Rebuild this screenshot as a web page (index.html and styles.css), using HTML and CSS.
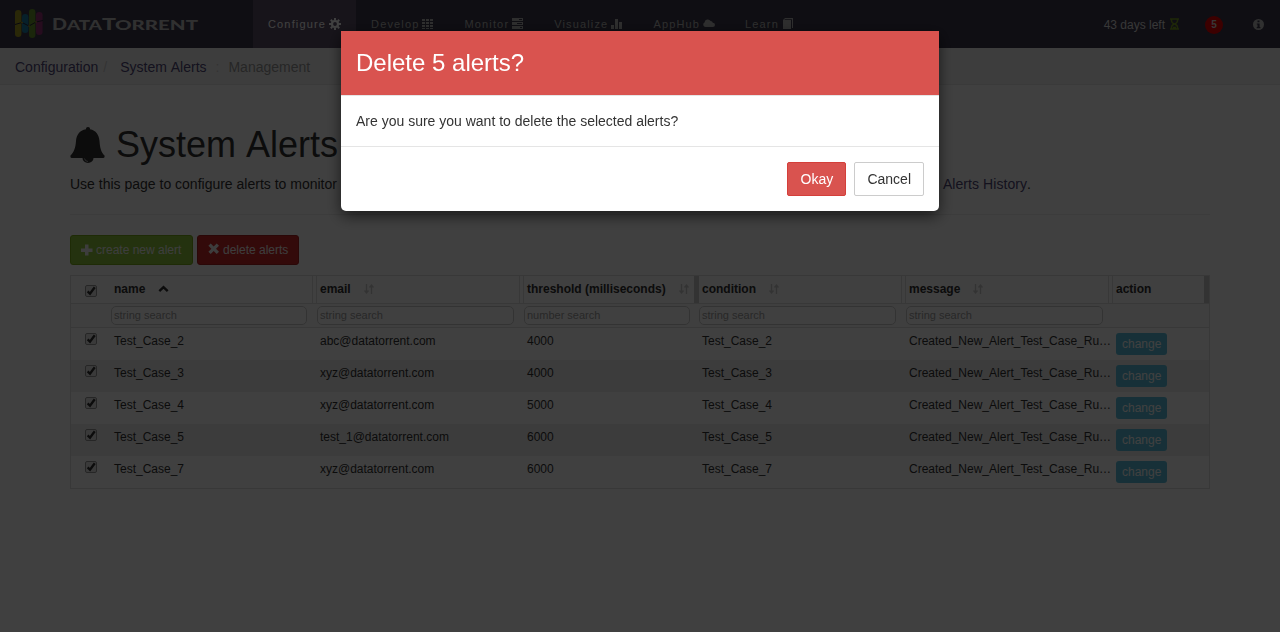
FILE: index.html
```
<!DOCTYPE html>
<html lang="en">
<head>
<meta charset="utf-8">
<title>System Alerts</title>
<link rel="stylesheet" href="styles.css">
</head>
<body>
<nav class="navbar">
  <svg class="logo" width="190" height="32" viewBox="0 0 190 32">
    <rect x="0" y="2" width="6.4" height="27" rx="3.2" fill="#a8a020"/>
    <rect x="7" y="6" width="6.4" height="19" rx="3.2" fill="#1d80a8"/>
    <rect x="14" y="1" width="6.4" height="29" rx="3.2" fill="#68982c"/>
    <rect x="21" y="4" width="6.6" height="23" rx="3.3" fill="#983078"/>
    <path d="M0 16.500L7 14.500L14 18L21 14L28 12.500" fill="none" stroke="#28243a" stroke-width="1"/>
    <g fill="#d0b020"><circle cx="7" cy="14.500" r=".8"/><circle cx="14" cy="18" r=".8"/><circle cx="21" cy="14" r=".8"/></g>
    <g class="logo-text">
      <text x="37" y="22" font-size="17" textLength="15" lengthAdjust="spacingAndGlyphs">D</text>
      <text x="52" y="22" font-size="14" textLength="35" lengthAdjust="spacingAndGlyphs">ATA</text>
      <text x="87" y="22" font-size="17" textLength="14" lengthAdjust="spacingAndGlyphs">T</text>
      <text x="100" y="22" font-size="14" textLength="83" lengthAdjust="spacingAndGlyphs">ORRENT</text>
    </g>
  </svg>
  <ul class="menu">
    <li class="item active"><span>Configure</span><svg class="ic" viewBox="0 0 12 12"><g fill="none" stroke="currentColor"><circle cx="6" cy="6" r="3" stroke-width="2.200"/><path d="M6 0V2M6 10V12M0 6H2M10 6H12M1.800 1.800L3.200 3.200M8.800 8.800L10.200 10.200M1.800 10.200L3.200 8.800M8.800 3.200L10.200 1.800" stroke-width="2"/></g></svg></li>
    <li class="item"><span>Develop</span><svg class="ic" viewBox="0 0 12 12"><path d="M0 1h3v2H0zM4 1h3v2H4zM8 1h3v2H8zM0 4h3v2H0zM4 4h3v2H4zM8 4h3v2H8zM0 7h3v2H0zM4 7h3v2H4zM8 7h3v2H8zM0 10h3v1H0zM4 10h3v1H4zM8 10h3v1H8z"/></svg></li>
    <li class="item"><span>Monitor</span><svg class="ic" viewBox="0 0 12 12"><path fill-rule="evenodd" d="M0 0h11v3H0zM0 4h11v3H0zM0 8h11v3H0zM7 1v1h3V1zM5 5v1h5V5zM8 9v1h2V9z"/></svg></li>
    <li class="item"><span>Visualize</span><svg class="ic" viewBox="0 0 12 12"><path d="M0 7h3v4H0zM4 1h3v10H4zM8 4h3v7H8z"/></svg></li>
    <li class="item"><span>AppHub</span><svg class="ic" viewBox="0 0 12 12"><path d="M2.500 9A2.400 2.400 0 0 1 1.500 4.500A3.300 3.300 0 0 1 7.600 3A2.300 2.300 0 0 1 9.800 4.800A2.100 2.100 0 0 1 9.900 9z"/></svg></li>
    <li class="item"><span>Learn</span><svg class="ic" viewBox="0 0 12 12"><path d="M1 2L3 0H11V10H10V1.200H3L2.300 2H9V11H1z"/></svg></li>
  </ul>
  <div class="status">
    <span class="days">43 days left</span>
    <svg class="glass" width="9" height="12" viewBox="0 0 9 12"><path d="M0 .9H9M0 11.100H9M1.500 1V3Q1.500 4.500 4 6Q1.500 7.500 1.500 9V11M7.500 1V3Q7.500 4.500 5 6Q7.500 7.500 7.500 9V11M3 9.600H6" fill="none" stroke="#7a9e20" stroke-width="1.500"/></svg>
    <span class="count">5</span>
    <svg class="info" width="11" height="11" viewBox="0 0 11 11"><circle cx="5.500" cy="5.500" r="5.500" fill="#c0c0c0"/><path d="M4.500 1.600h2v1.700h-2zM3.800 4.400h2.800V8h.8v1.200H3.700V8h.8V5.400h-.7z" fill="#3c384c"/></svg>
  </div>
</nav>
<div class="crumbs"><a>Configuration</a><i class="slash">/</i><a>System Alerts</a><i class="colon">:</i><span>Management</span></div>
<main class="container">
  <h1 class="title"><svg width="36" height="36" viewBox="0 0 36 36"><path d="M18 0a2 2 0 0 1 2 2.300C26 3.300 29 8 29.500 14C30 21 31 25 34.500 28.500Q35 31 33 31H23.500A5.500 5 0 0 1 12.500 31H2Q0 31 .5 28.500C4 25 5.500 21 6 14C6.500 8 9.500 3.300 16 2.300A2 2 0 0 1 18 0z" fill="#303030"/><path d="M14.500 31.500Q15 34.300 18 34.500" fill="none" stroke="#ccc" stroke-width=".8"/></svg><span>System Alerts</span></h1>
  <div class="lead"><span>Use this page to configure alerts to monitor</span><span><a>Alerts History</a>.</span></div>
  <hr class="rule">
  <div class="actions">
    <button class="btn green"><svg class="ic" viewBox="0 0 12 12"><path d="M4 .5h3.500V4.500H11.500V8H7.500V11.500H4V8H0V4.500H4z"/></svg>create new alert</button>
    <button class="btn red"><svg class="ic up1" viewBox="0 0 12 12"><path d="M2.700 .5L5.700 3.500L8.700 .5L11 2.800L8 5.800L11 8.800L8.700 11.100L5.700 8.100L2.700 11.100L.4 8.800L3.400 5.800L.4 2.800z"/></svg>delete alerts</button>
  </div>
  <div class="table">
    <div class="row head">
      <div class="chk"><b class="box"><svg viewBox="0 0 12 12"><path d="M2 6.500L4.800 9.300L10.500 1.500"/></svg></b></div>
      <div class="th">name<svg class="up" width="11" height="8" viewBox="0 0 11 8"><path d="M1.300 6.200L5.500 2.200L9.700 6.200" fill="none" stroke="#303030" stroke-width="2.400"/></svg></div>
      <div class="th">email<svg class="sort" viewBox="0 0 10 12"><path d="M2.500 1V10M.5 7.500L2.500 10L4.500 7.500M7.500 11V2M5.500 4.500L7.500 2L9.500 4.500"/></svg></div>
      <div class="th solid">threshold (milliseconds)<svg class="sort" viewBox="0 0 10 12"><path d="M2.500 1V10M.5 7.500L2.500 10L4.500 7.500M7.500 11V2M5.500 4.500L7.500 2L9.500 4.500"/></svg></div>
      <div class="th">condition<svg class="sort" viewBox="0 0 10 12"><path d="M2.500 1V10M.5 7.500L2.500 10L4.500 7.500M7.500 11V2M5.500 4.500L7.500 2L9.500 4.500"/></svg></div>
      <div class="th">message<svg class="sort" viewBox="0 0 10 12"><path d="M2.500 1V10M.5 7.500L2.500 10L4.500 7.500M7.500 11V2M5.500 4.500L7.500 2L9.500 4.500"/></svg></div>
      <div class="th solid">action</div>
    </div>
    <div class="row filter">
      <div></div>
      <div><div class="search">string search</div></div>
      <div><div class="search">string search</div></div>
      <div><div class="search number">number search</div></div>
      <div><div class="search">string search</div></div>
      <div><div class="search">string search</div></div>
      <div></div>
    </div>
    <div class="row data"><div class="chk"><b class="box"><svg viewBox="0 0 12 12"><path d="M2 6.500L4.800 9.300L10.500 1.500"/></svg></b></div><div class="td">Test_Case_2</div><div class="td">abc@datatorrent.com</div><div class="td">4000</div><div class="td">Test_Case_2</div><div class="td">Created_New_Alert_Test_Case_Ru…</div><div class="td"><span class="change">change</span></div></div>
    <div class="row data alt"><div class="chk"><b class="box"><svg viewBox="0 0 12 12"><path d="M2 6.500L4.800 9.300L10.500 1.500"/></svg></b></div><div class="td">Test_Case_3</div><div class="td">xyz@datatorrent.com</div><div class="td">4000</div><div class="td">Test_Case_3</div><div class="td">Created_New_Alert_Test_Case_Ru…</div><div class="td"><span class="change">change</span></div></div>
    <div class="row data"><div class="chk"><b class="box"><svg viewBox="0 0 12 12"><path d="M2 6.500L4.800 9.300L10.500 1.500"/></svg></b></div><div class="td">Test_Case_4</div><div class="td">xyz@datatorrent.com</div><div class="td">5000</div><div class="td">Test_Case_4</div><div class="td">Created_New_Alert_Test_Case_Ru…</div><div class="td"><span class="change">change</span></div></div>
    <div class="row data alt"><div class="chk"><b class="box"><svg viewBox="0 0 12 12"><path d="M2 6.500L4.800 9.300L10.500 1.500"/></svg></b></div><div class="td">Test_Case_5</div><div class="td">test_1@datatorrent.com</div><div class="td">6000</div><div class="td">Test_Case_5</div><div class="td">Created_New_Alert_Test_Case_Ru…</div><div class="td"><span class="change">change</span></div></div>
    <div class="row data"><div class="chk"><b class="box"><svg viewBox="0 0 12 12"><path d="M2 6.500L4.800 9.300L10.500 1.500"/></svg></b></div><div class="td">Test_Case_7</div><div class="td">xyz@datatorrent.com</div><div class="td">6000</div><div class="td">Test_Case_7</div><div class="td">Created_New_Alert_Test_Case_Ru…</div><div class="td"><span class="change">change</span></div></div>
  </div>
</main>
<div class="backdrop">
  <div class="modal">
    <div class="modal-head">Delete 5 alerts?</div>
    <div class="modal-body">Are you sure you want to delete the selected alerts?</div>
    <div class="modal-foot"><button class="mbtn okay">Okay</button><button class="mbtn">Cancel</button></div>
  </div>
</div>
</body>
</html>
```
FILE: styles.css
```
* { box-sizing: border-box; }
body { margin: 0; height: 632px; overflow: hidden; background: #fff; color: #333; font: 14px/20px "Liberation Sans", Arial, sans-serif; }
.navbar { display: flex; height: 48px; padding-left: 15px; background: #3c384c; }
.logo { margin-top: 8px; flex: none; }
.logo-text { font-family: Lato, sans-serif; font-weight: 900; fill: #c0c0c0; }
.menu { display: flex; margin: 0 0 0 48px; padding: 0; list-style: none; }
.item { display: flex; align-items: center; padding: 0 15px; color: #b8b8b8; font-size: 11px; letter-spacing: 1.15px; }
.item span { white-space: nowrap; }
.item.active { background: #5c5068; color: #fff; }
.ic { width: 12px; height: 12px; fill: currentColor; flex: none; margin-left: 3px; }
.item .ic { margin-bottom: 1px; }
.status { display: flex; align-items: center; margin-left: auto; padding-right: 16px; color: #ddd; font-size: 12px; }
.days { padding-top: 2px; }
.glass { margin-left: 5px; }
.count { width: 18px; height: 18px; margin: 2px 30px 0 26px; border-radius: 9px; background: #f00000; color: #ddd; font-size: 10px; font-weight: 700; line-height: 17px; text-align: center; }
.crumbs { display: flex; height: 37px; padding: 9px 15px; background: #f4f4f4; border-bottom: 1px solid #e8e8e8; color: #999; word-spacing: .8px; }
.crumbs a { color: #504878; }
.crumbs i { font-style: normal; color: #ccc; }
.slash { margin: 0 13px 0 5px; }
.colon { margin: 0 9px; }
.container { width: 1140px; margin: 0 auto; }
.title { display: flex; align-items: center; height: 40px; margin: 40px 0 0; font-size: 36px; font-weight: 400; line-height: 40px; word-spacing: 2px; }
.title span { margin-left: 10px; }
.title svg { margin-bottom: 1px; }
.lead { display: flex; justify-content: space-between; width: 961px; margin-top: 9px; }
.lead a { color: #504878; letter-spacing: .07px; }
.rule { height: 1px; margin: 20px 0; border: 0; background: #eee; }
.actions { display: flex; gap: 4px; }
.btn { display: flex; align-items: center; height: 30px; padding: 0 10px; border: 1px solid; border-radius: 3px; font: 12px/18px "Liberation Sans", Arial, sans-serif; color: #f4f4f4; white-space: nowrap; }
.btn .ic { margin: 0 3px 0 0; }
.btn .up1 { margin-bottom: 2px; }
.green { width: 123px; background: #8fc73e; border-color: #7aaa18; }
.red { width: 102px; background: #cc2828; border-color: #a82020; }
.table { margin-top: 10px; border: 1px solid #ddd; font-size: 12px; }
.row { display: grid; grid-template-columns: 40px 206px 207px 175px 207px 207px 96px; }
.head { height: 28px; border-bottom: 1px solid #ddd; font-weight: 700; }
.th { position: relative; display: flex; align-items: center; padding: 0 0 1px 3px; color: #303030; border-right: 1px solid #ddd; }
.th::after { content: ""; width: 1px; margin: 0 3px -1px auto; align-self: stretch; background: #ddd; }
.th.solid { border-right: 5px solid #ccc; }
.th.solid::after { display: none; }
.up { margin-left: 13px; }
.sort { width: 10px; height: 12px; margin-left: 13px; fill: none; stroke: #ccc; stroke-width: 1.4; }
.filter { height: 24px; padding-top: 2px; border-bottom: 1px solid #ddd; background: #fafafa; }
.search { height: 19px; margin-right: 10px; padding-left: 2px; border: 1px solid #ccc; border-radius: 5px; background: #fff; color: #a0a0a0; font-size: 11px; line-height: 17px; }
.search.number { margin-right: 9px; }
.data { height: 32px; }
.alt { background: #f0f0f0; }
.td { padding: 3px; white-space: nowrap; }
.chk { padding: 5px 0 0 14px; }
.head .chk { padding-top: 9px; }
.box { display: block; width: 12px; height: 12px; border: 1px solid #999; border-radius: 2px; background: #e8e8e8; }
.box svg { display: block; width: 10px; height: 10px; fill: none; stroke: #303030; stroke-width: 2.8; }
.change { display: inline-block; height: 22px; margin-top: 2px; padding: 0 6px; border-radius: 3px; background: #5bc0de; color: #fff; line-height: 22px; }
.backdrop { position: fixed; inset: 0; background: rgba(0, 0, 0, .75); padding-top: 31px; }
.modal { width: 598px; margin: 0 auto; border-radius: 0 0 5px 5px; background: #fff; box-shadow: 0 5px 15px rgba(0, 0, 0, .6); overflow: hidden; }
.modal-head { height: 65px; padding: 15px; border-bottom: 1px solid #e5e5e5; background: #d9534f; color: #fff; font-size: 24px; line-height: 34px; }
.modal-body { height: 50px; padding: 15px; }
.modal-foot { display: flex; justify-content: flex-end; gap: 8px; height: 65px; padding: 15px; border-top: 1px solid #e5e5e5; }
.mbtn { height: 34px; padding: 0 12px; border: 1px solid #ccc; border-radius: 2px; background: #fff; color: #333; font: 14px/20px "Liberation Sans", Arial, sans-serif; }
.okay { width: 59px; background: #d9534f; border-color: #d43f3a; color: #fff; }
```
